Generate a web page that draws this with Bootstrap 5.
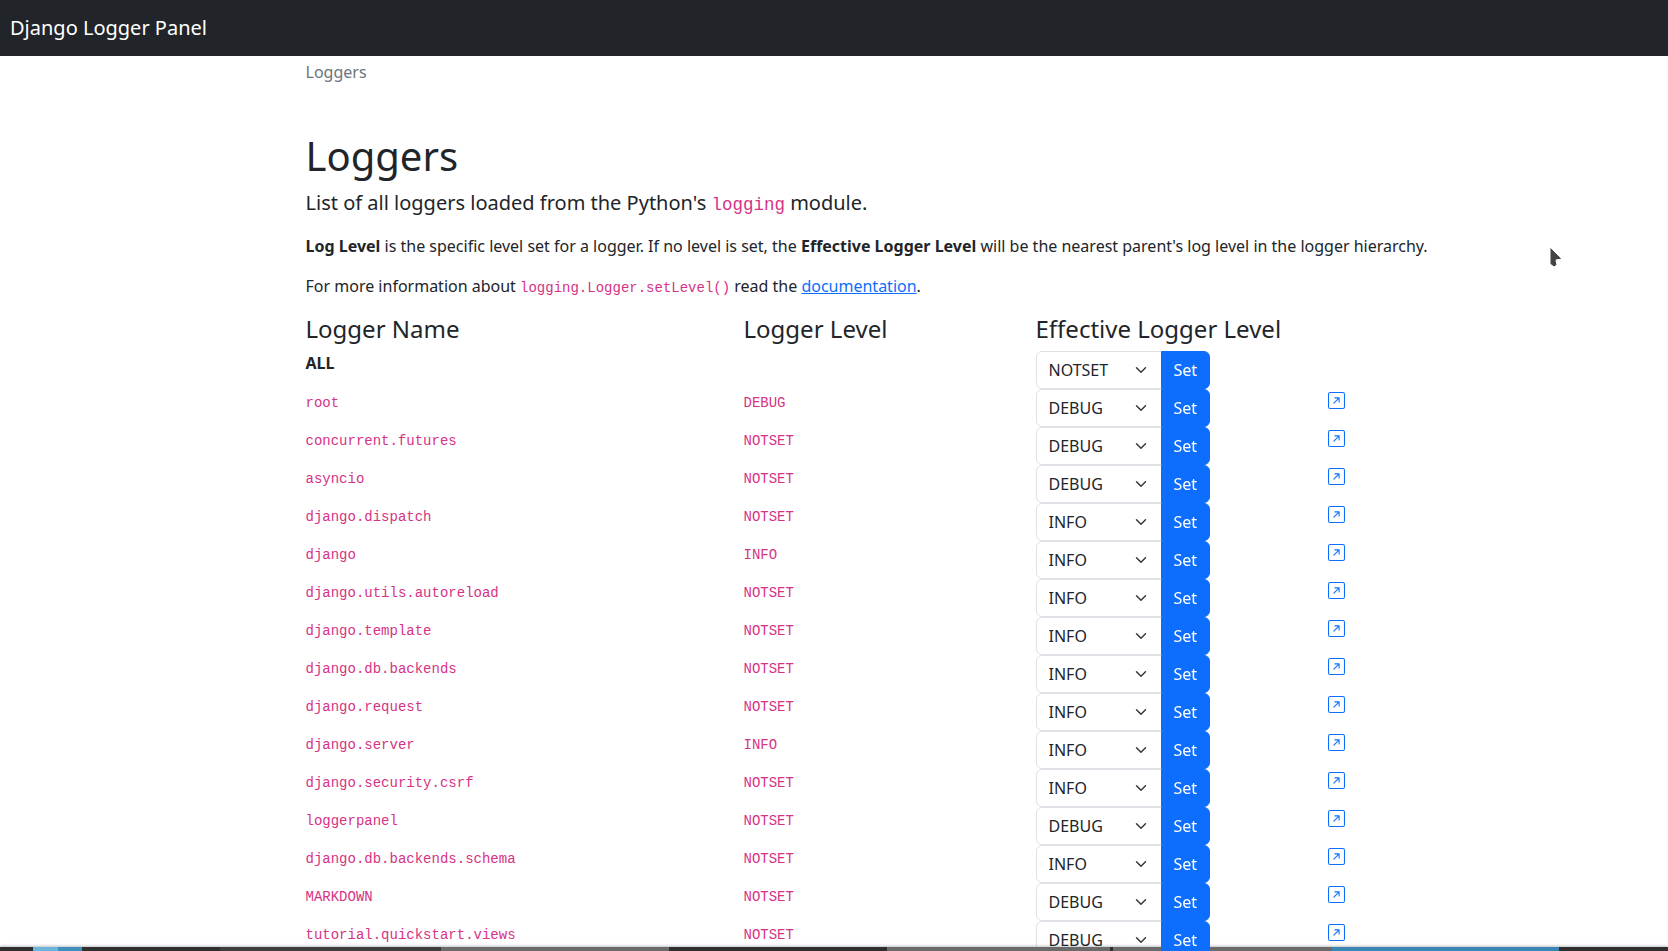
<!DOCTYPE html>
<html lang="en">
<head>
    <meta charset="UTF-8">
    <meta name="viewport" content="width=device-width, initial-scale=1.0">
    <title>Django Logger Panel</title>
    <link href="https://cdn.jsdelivr.net/npm/bootstrap@5.3.0/dist/css/bootstrap.min.css" rel="stylesheet">
    <style>
        html, body { height: 951px; overflow: hidden; }
        body { font-family: "Noto Sans", sans-serif; color: #212529; }
        code { font-family: "Liberation Mono", monospace; }
        .top-bar { padding-left: 10px; padding-right: 10px; }
        .page-wrap { width: 1056px; margin-left: 305.5px; }
        .page-wrap .breadcrumb-item.active { color: #6c757d; }
        .page-wrap .lead { font-weight: 400; }
        .logger-row { display: grid; grid-template-columns: 438px 292px 292px 34px; }
        .logger-row h4 { margin-bottom: 7px; }
        .logger-row .form-select { flex: 0 0 126px; width: 126px; }
        .logger-row .input-group { width: 174px; flex-wrap: nowrap; }
        .open-link { display: block; width: 17px; height: 17px; margin-top: 3px; color: #0d6efd; }
        .open-link svg { display: block; }
        .screen-cursor { position: fixed; left: 1549px; top: 246px; }
        .task-strip { position: fixed; left: 0; right: 0; bottom: 0; height: 4px; background: #2f2f2f; box-shadow: 0 -1px 3px rgba(0,0,0,.25); }
        .task-item { position: absolute; top: 0; bottom: 0; }
    </style>
</head>
<body>
<nav class="navbar navbar-dark bg-dark top-bar">
    <a class="navbar-brand m-0" href="#">Django Logger Panel</a>
</nav>
<div class="page-wrap">
    <nav aria-label="breadcrumb" class="mt-1">
        <ol class="breadcrumb mb-5">
            <li class="breadcrumb-item active" aria-current="page">Loggers</li>
        </ol>
    </nav>
    <h1 class="fw-normal">Loggers</h1>
    <p class="lead fs-5">List of all loggers loaded from the Python's <code>logging</code> module.</p>
    <p class="text-nowrap"><strong>Log Level</strong> is the specific level set for a logger. If no level is set, the <strong>Effective Logger Level</strong> will be the nearest parent's log level in the logger hierarchy.</p>
    <p>For more information about <code>logging.Logger.setLevel()</code> read the <a href="#">documentation</a>.</p>

    <div class="logger-row">
        <h4 class="fw-normal">Logger Name</h4>
        <h4 class="fw-normal">Logger Level</h4>
        <h4 class="fw-normal text-nowrap">Effective Logger Level</h4>
    </div>
    <div id="logger-list"></div>
</div>

<svg class="screen-cursor" width="15" height="23" viewBox="0 0 15 23">
    <path d="M1 1v17l4 3 3-2-1-5 6-1z" fill="#444" stroke="#fff" stroke-width="1"/>
</svg>

<div class="task-strip">
    <div class="task-item" style="left:33px;width:25px;background:#6cb4dc"></div>
    <div class="task-item" style="left:58px;width:24px;background:#3f8fbd"></div>
    <div class="task-item" style="left:220px;width:221px;background:#3d3d3d"></div>
    <div class="task-item" style="left:441px;width:228px;background:#6b6b6b"></div>
    <div class="task-item" style="left:887px;width:223px;background:#6b6b6b"></div>
    <div class="task-item" style="left:1113px;width:219px;background:#6b6b6b"></div>
    <div class="task-item" style="left:1332px;width:227px;background:#3a86b4"></div>
</div>

<script src="https://cdn.jsdelivr.net/npm/bootstrap@5.3.0/dist/js/bootstrap.bundle.min.js"></script>
<script>
    const levels = ["NOTSET", "DEBUG", "INFO", "WARNING", "ERROR", "CRITICAL"];
    const loggers = [
        ["root", "DEBUG", "DEBUG"],
        ["concurrent.futures", "NOTSET", "DEBUG"],
        ["asyncio", "NOTSET", "DEBUG"],
        ["django.dispatch", "NOTSET", "INFO"],
        ["django", "INFO", "INFO"],
        ["django.utils.autoreload", "NOTSET", "INFO"],
        ["django.template", "NOTSET", "INFO"],
        ["django.db.backends", "NOTSET", "INFO"],
        ["django.request", "NOTSET", "INFO"],
        ["django.server", "INFO", "INFO"],
        ["django.security.csrf", "NOTSET", "INFO"],
        ["loggerpanel", "NOTSET", "DEBUG"],
        ["django.db.backends.schema", "NOTSET", "INFO"],
        ["MARKDOWN", "NOTSET", "DEBUG"],
        ["tutorial.quickstart.views", "NOTSET", "DEBUG"]
    ];
    const arrowIcon = `<svg width="17" height="17" viewBox="0 0 16 16" fill="currentColor"><path fill-rule="evenodd" d="M15 2a1 1 0 0 0-1-1H2a1 1 0 0 0-1 1v12a1 1 0 0 0 1 1h12a1 1 0 0 0 1-1V2zM0 2a2 2 0 0 1 2-2h12a2 2 0 0 1 2 2v12a2 2 0 0 1-2 2H2a2 2 0 0 1-2-2V2zm5.854 8.803a.5.5 0 1 1-.708-.707L9.243 6H6.475a.5.5 0 1 1 0-1h3.975a.5.5 0 0 1 .5.5v3.975a.5.5 0 1 1-1 0V6.707l-4.096 4.096z"/></svg>`;

    function levelForm(selected) {
        const options = levels.map(l => `<option${l === selected ? " selected" : ""}>${l}</option>`).join("");
        return `<form class="input-group"><select class="form-select">${options}</select><button type="button" class="btn btn-primary">Set</button></form>`;
    }

    const list = document.getElementById("logger-list");
    list.innerHTML = `<div class="logger-row"><div><strong>ALL</strong></div><div></div><div>${levelForm("NOTSET")}</div><div></div></div>`;
    loggers.forEach(([name, level, effective]) => {
        list.innerHTML += `<div class="logger-row">
            <div><code>${name}</code></div>
            <div><code>${level}</code></div>
            <div>${levelForm(effective)}</div>
            <div><a class="open-link" href="#">${arrowIcon}</a></div>
        </div>`;
    });
</script>
</body>
</html>
